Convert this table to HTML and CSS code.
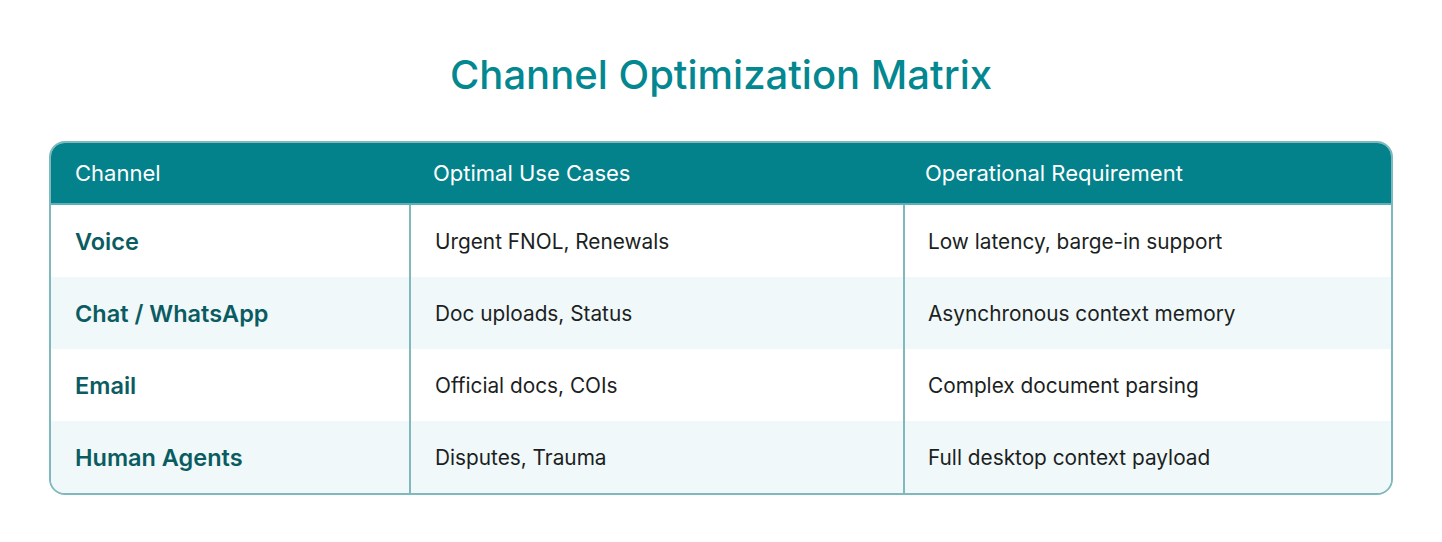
FILE: index.html
```html
<!DOCTYPE html>
<html lang="en">
<head>
<meta charset="utf-8">
<title>Channel Optimization Matrix</title>
<link rel="stylesheet" href="styles.css">
</head>
<body>
<main class="page">
  <h1 class="title">Channel Optimization Matrix</h1>
  <div class="matrix">
    <div class="row head">
      <div class="cell">Channel</div>
      <div class="cell">Optimal Use Cases</div>
      <div class="cell">Operational Requirement</div>
    </div>
    <div class="row">
      <div class="cell name">Voice</div>
      <div class="cell">Urgent FNOL, Renewals</div>
      <div class="cell">Low latency, barge-in support</div>
    </div>
    <div class="row alt">
      <div class="cell name">Chat / WhatsApp</div>
      <div class="cell">Doc uploads, Status</div>
      <div class="cell">Asynchronous context memory</div>
    </div>
    <div class="row">
      <div class="cell name">Email</div>
      <div class="cell">Official docs, COIs</div>
      <div class="cell">Complex document parsing</div>
    </div>
    <div class="row alt">
      <div class="cell name">Human Agents</div>
      <div class="cell">Disputes, Trauma</div>
      <div class="cell">Full desktop context payload</div>
    </div>
  </div>
</main>
</body>
</html>
```

FILE: styles.css
```css
* { box-sizing: border-box; }
html, body { margin: 0; padding: 0; background: #ffffff; }
body {
  font-family: Inter, "Noto Sans", "Liberation Sans", sans-serif;
  color: #1f2323;
}
.page {
  padding: 49px 49px 0 49px;
}
.title {
  margin: 0 0 40px 0;
  text-align: center;
  font-size: 40px;
  line-height: 52px;
  font-weight: 500;
  color: #038790;
  letter-spacing: 0;
}
.matrix {
  border: 2px solid #7fb9bd;
  border-radius: 16px;
  overflow: hidden;
}
.row {
  display: grid;
  grid-template-columns: 358px 494px 1fr;
  height: 72px;
  background: #ffffff;
}
.row.alt { background: #f0f8f9; }
.row.head {
  background: #03828c;
  height: 62px;
  border-bottom: 2px solid #5fb0b6;
}
.cell {
  display: flex;
  align-items: center;
  padding-left: 24px;
  font-size: 20.8px;
  letter-spacing: 0;
  color: #1c1f1f;
}
.row:not(.head) .cell + .cell { border-left: 2px solid #7fb9bd; }
.row:not(.head) .cell:last-child { padding-left: 23px; }
.head .cell {
  color: #ffffff;
  font-weight: 400;
  font-size: 22px;
  padding-left: 24px;
}
.head .cell:nth-child(2) { padding-left: 24px; }
.head .cell:nth-child(3) { padding-left: 22px; }
.name {
  font-size: 23.5px;
  font-weight: 600;
  color: #0b5c62;
}
```
